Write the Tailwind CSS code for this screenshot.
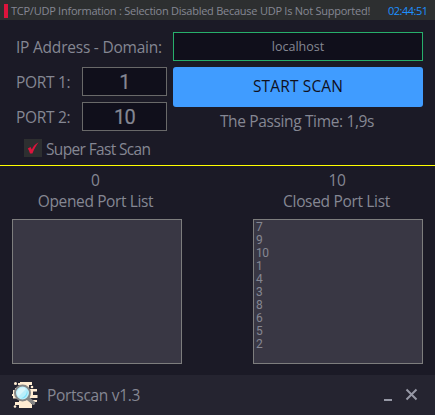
<!DOCTYPE html>
<html lang="en">
<head>
<meta charset="utf-8">
<title>Portscan v1.3</title>
<script src="https://cdn.jsdelivr.net/npm/@tailwindcss/browser@4"></script>
</head>
<body class="w-[435px] h-[415px] overflow-hidden bg-[#1b1a26] text-[#858793] font-['Open_Sans','Noto_Sans',sans-serif] text-[15.5px] leading-5 whitespace-nowrap flex flex-col">
  <header class="h-5 shrink-0 bg-[#2d2f30] flex items-center pl-1 text-[11px]">
    <span class="w-1 h-3.5 bg-[#dc143c] mt-0.5"></span>
    <span class="ml-[3px] w-[377px] mt-0.5 tracking-[-0.25px]">TCP/UDP Information : Selection Disabled Because UDP Is Not Supported!</span>
    <time class="mt-0.5 text-[#1e90ff] tracking-[-0.5px]">02:44:51</time>
  </header>

  <main class="h-[145px] shrink-0 pt-3 pl-4 pr-3">
    <div class="flex">
      <label class="w-[157px] pt-[5px] tracking-[-0.22px]">IP Address - Domain:</label>
      <div class="w-[250px] h-[29px] border border-[#27ae6b] bg-[#100f1b] flex items-center justify-center text-[12.5px]">localhost</div>
    </div>
    <div class="flex mt-1.5">
      <div class="w-[157px]">
        <div class="flex h-[29px]">
          <label class="w-[66px] pt-[5px] tracking-[-0.3px]">PORT 1:</label>
          <div class="w-[85px] border border-[#696969] bg-[#100f1b] flex items-center justify-center font-['Roboto',sans-serif] text-[20px] tracking-[-0.8px] [-webkit-text-stroke:0.2px]">1</div>
        </div>
        <div class="flex h-[29px] mt-1.5">
          <label class="w-[66px] pt-[5px] tracking-[-0.3px]">PORT 2:</label>
          <div class="w-[85px] border border-[#696969] bg-[#100f1b] flex items-center justify-center font-['Roboto',sans-serif] text-[20px] tracking-[-0.8px] [-webkit-text-stroke:0.2px]">10</div>
        </div>
        <div class="flex mt-2 ml-2">
          <span class="size-[18px] bg-[#2d2f30] flex items-center justify-center">
            <svg class="size-3" viewBox="0 0 12 12" fill="#dc143c"><path d="M.8 6.4 3.5 5 4.8 7.600C6.4 4.400 8.2 2 11.600.3 9 3.7 7.200 7 5.400 11.4H3C2.400 9.5 1.8 7.8.8 6.4Z"/></svg>
          </span>
          <label class="ml-1 tracking-[-0.65px]">Super Fast Scan</label>
        </div>
      </div>
      <div class="w-[250px]">
        <div class="h-10 pb-0.5 rounded-[3px] bg-[#409cff] text-[#10101c] flex items-center justify-center tracking-[0.15px]">START SCAN</div>
        <div class="text-center mt-1 pr-0.5 tracking-[-0.36px]">The Passing Time: 1,9s</div>
      </div>
    </div>
  </main>

  <section class="h-[210px] shrink-0 border-t border-[#ffff00] flex justify-between px-3 pt-1">
    <div class="w-[170px]">
      <div class="h-[21px] text-center pr-[3px]">0</div>
      <div class="h-7 text-center pr-[3px] tracking-[-0.38px]">Opened Port List</div>
      <div class="h-[145px] border border-[#7d7d7d] bg-[#393744]"></div>
    </div>
    <div class="w-[170px]">
      <div class="h-[21px] text-center pr-0.5 tracking-[-0.4px]">10</div>
      <div class="h-7 text-center pr-[3px] tracking-[-0.33px]">Closed Port List</div>
      <ul class="h-[145px] border border-[#7d7d7d] bg-[#393744] pl-0.5 pt-px font-['Roboto',sans-serif] text-[12px] leading-[13px] tracking-[-0.5px]">
        <li>7</li><li>9</li><li>10</li><li>1</li><li>4</li><li>3</li><li>8</li><li>6</li><li>5</li><li>2</li>
      </ul>
    </div>
  </section>

  <footer class="h-10 shrink-0 bg-[#252430] flex items-center pl-3">
    <svg class="size-[26px]" viewBox="0 0 26 26">
      <path d="M8 0H20V3H17V7H25V9.500H21V13H25.500V16H18V18H25V20H19V22H20V26H7V23H3V20H7V17H1V14H0V12H1V8H3V6H7V3H6V1H8Z" fill="#ffecd2"/>
      <path d="M17 3.500H24V6H18ZM21 10H26V12.500H21ZM0 16.500H7V19H0Z" fill="#252430"/>
      <g fill="#ffecd2"><circle cx="3.500" cy="1.500" r="1.500"/><circle cx="20" cy="5" r="1.300"/><circle cx="23.500" cy="14.500" r="1.500"/><circle cx="3" cy="24.500" r="1.300"/></g>
      <path d="M16 16.500 21.500 21" stroke="#858585" stroke-width="3.600" stroke-linecap="round"/>
      <circle cx="10.500" cy="11" r="7.500" fill="#b9effc" stroke="#858585" stroke-width="2"/>
      <path d="M5 12A6 6 0 0 1 12 5.500L14 7 6 15Z" fill="#d9f6fc"/>
      <path d="M15 8A6 6 0 0 1 9 16.500Q15 14 15 8Z" fill="#7ee0fb"/>
    </svg>
    <span class="ml-[9px] tracking-[-0.3px]">Portscan v1.3</span>
    <svg class="ml-auto mr-[13px] w-[38px] h-4" viewBox="0 0 38 16" fill="none" stroke="#9698a5" stroke-width="2">
      <path d="M0 13H8M22.500 2.500 32.500 12.500M32.500 2.500 22.500 12.500"/>
    </svg>
  </footer>
</body>
</html>
